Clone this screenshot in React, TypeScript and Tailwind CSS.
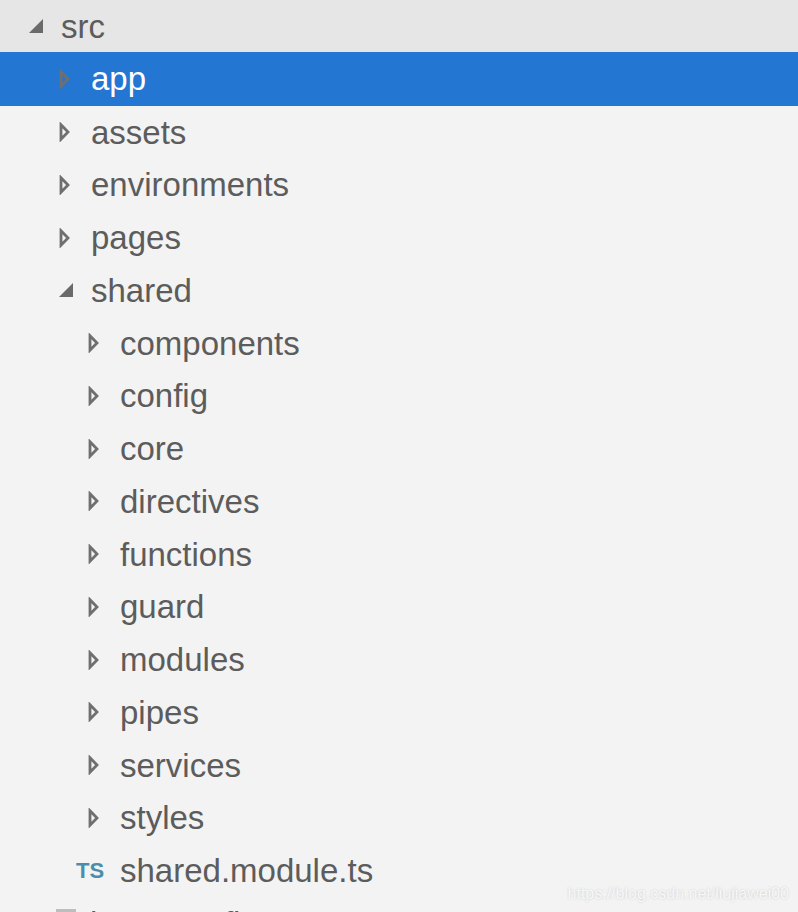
const FONT = "font-['Liberation_Sans',Arial,sans-serif]"

function Collapsed({ className }: { className: string }) {
  return (
    <svg viewBox="0 0 12 20" className={`h-5 w-3 shrink-0 ${className}`}>
      <path d="M3 2.8 L10 10 L3 17.2 Z" fill="none" stroke="currentColor" strokeWidth="2.8" />
    </svg>
  )
}

function Expanded({ className }: { className: string }) {
  return (
    <svg viewBox="0 0 16 16" className={`h-4 w-4 shrink-0 ${className}`}>
      <path d="M1 15 L15 1 L15 15 Z" fill="currentColor" />
    </svg>
  )
}

function Row({
  label,
  depth,
  open,
  selected,
}: {
  label: string
  depth: 0 | 1 | 2
  open?: boolean
  selected?: boolean
}) {
  const pad = depth === 0 ? 'pl-[28px]' : depth === 1 ? 'pl-[58px]' : 'pl-[87px]'
  const height = depth === 0 ? 'h-[52px]' : selected ? 'h-[53.75px]' : 'h-[52.75px]'
  return (
    <div
      className={`flex items-center ${height} ${pad} ${selected ? 'bg-[#2376d2] text-white' : 'text-[#5c5c5c]'}`}
    >
      <div className="flex w-[33px] shrink-0 items-center">
        {open ? <Expanded className="text-[#6a6a6a]" /> : <Collapsed className="text-[#6f6f6f]" />}
      </div>
      <span className="leading-none">{label}</span>
    </div>
  )
}

const FOLDERS = ['components', 'config', 'core', 'directives', 'functions', 'guard', 'modules', 'pipes', 'services', 'styles']

export default function App() {
  return (
    <div className={`relative h-[912px] w-[798px] overflow-hidden bg-[#f3f3f3] text-[33px] ${FONT}`}>
      <div className="bg-[#e6e6e6]">
        <Row label="src" depth={0} open />
      </div>
      <Row label="app" depth={1} selected />
      <Row label="assets" depth={1} />
      <Row label="environments" depth={1} />
      <Row label="pages" depth={1} />
      <Row label="shared" depth={1} open />
      {FOLDERS.map((f) => (
        <Row key={f} label={f} depth={2} />
      ))}
      <div className="flex h-[52.75px] items-center pl-[76px] text-[#5c5c5c]">
        <span className="w-[44px] shrink-0 text-[22px] font-bold leading-none text-[#4b8eab]">TS</span>
        <span className="leading-none">shared.module.ts</span>
      </div>
      <div className="flex h-[52.75px] items-center pl-[56px] text-[#5c5c5c]">
        <div className="h-[28px] w-[20px] shrink-0 bg-[#bdbdbd]" />
        <span className="ml-[14px] leading-none">base.config</span>
      </div>
      <span className="absolute bottom-[10px] right-[9px] font-['Liberation_Sans',sans-serif] text-[16px] leading-none text-white/80 [text-shadow:0_0_2px_rgba(0,0,0,0.2)]">
        https://blog.csdn.net/liujiawei00
      </span>
    </div>
  )
}
